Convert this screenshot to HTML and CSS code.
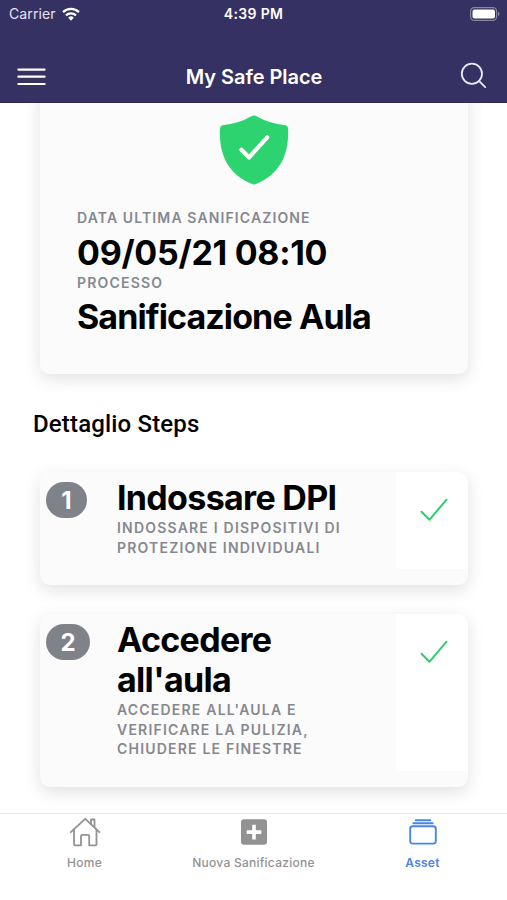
FILE: index.html
```html
<!DOCTYPE html>
<html lang="it">
<head>
<meta charset="utf-8">
<meta name="viewport" content="width=device-width, initial-scale=1">
<title>My Safe Place</title>
<link rel="stylesheet" href="styles.css">
</head>
<body>
<div class="app">
  <header class="header">
    <div class="status">
      <div class="status-left">
        <span class="carrier">Carrier</span>
        <svg class="wifi" width="18" height="14" viewBox="0 0 18 14" fill="none" stroke="#fff" stroke-width="2.3"><path d="M1 5.2a11.5 11.5 0 0 1 16 0"/><path d="M4 8.4a7.2 7.2 0 0 1 10 0"/><path d="M9 13.8l-2.8-3.1a4 4 0 0 1 5.6 0z" fill="#fff" stroke="none"/></svg>
      </div>
      <span class="time">4:39 PM</span>
      <div class="status-right">
        <svg width="31" height="14" viewBox="0 0 31 14"><rect x=".6" y=".6" width="26" height="12.8" rx="3.6" fill="none" stroke="#88859f" stroke-width="1.2"/><rect x="2.5" y="2.5" width="22.5" height="9" rx="2" fill="#fff"/><path d="M28 4.5q3 2.5 0 5z" fill="#88859f"/></svg>
      </div>
    </div>
    <div class="navbar">
      <div class="nav-side">
        <svg width="29" height="18" viewBox="0 0 29 18" stroke="#fff" stroke-width="2.2" stroke-linecap="round"><path d="M1.4 1.6h26.2M1.4 8.7h26.2M1.4 16h26.2"/></svg>
      </div>
      <h1 class="title">My Safe Place</h1>
      <div class="nav-side end">
        <svg class="search" width="28" height="28" viewBox="0 0 28 28" fill="none" stroke="#e9e7f8" stroke-width="1.8" stroke-linecap="round"><circle cx="11.9" cy="11.8" r="10.1"/><path d="M19.2 19.2l6 6"/></svg>
      </div>
    </div>
  </header>

  <main class="content">
    <section class="card summary">
      <svg class="shield" width="70" height="70" viewBox="0 0 70 70"><path d="M32.4 1.2Q35 -.2 37.6 1.2Q50 8.5 66.5 10.2Q68.7 10.6 69 13C70.5 39 61 59 37.5 68.8Q35 70 32.5 68.8C9 59 -.5 39 1 13Q1.3 10.6 3.5 10.2Q20 8.5 32.4 1.2Z" fill="#2dd36f"/><path d="M22.5 34.8l7.5 7.7L48.2 22.3" fill="none" stroke="#fff" stroke-width="4.2" stroke-linecap="round" stroke-linejoin="round"/></svg>
      <p class="label label-date">DATA ULTIMA SANIFICAZIONE</p>
      <p class="value value-date">09/05/21 08:10</p>
      <p class="label label-process">PROCESSO</p>
      <p class="value value-process">Sanificazione Aula</p>
    </section>

    <h2 class="section-title">Dettaglio Steps</h2>

    <article class="card step">
      <div class="step-num"><span class="badge">1</span></div>
      <div class="step-text">
        <h3 class="step-title">Indossare DPI</h3>
        <p class="label">INDOSSARE I DISPOSITIVI DI<br>PROTEZIONE INDIVIDUALI</p>
      </div>
      <div class="step-state"><svg width="28" height="24" viewBox="0 0 28 24" fill="none" stroke="#2bcf6c" stroke-width="2" stroke-linecap="round" stroke-linejoin="round"><path d="M1.5 13.8l7.9 8L26.5 1.7"/></svg></div>
    </article>

    <article class="card step">
      <div class="step-num"><span class="badge wide">2</span></div>
      <div class="step-text">
        <h3 class="step-title">Accedere<br>all'aula</h3>
        <p class="label">ACCEDERE ALL'AULA E<br>VERIFICARE LA PULIZIA,<br>CHIUDERE LE FINESTRE</p>
      </div>
      <div class="step-state"><svg width="28" height="24" viewBox="0 0 28 24" fill="none" stroke="#2bcf6c" stroke-width="2" stroke-linecap="round" stroke-linejoin="round"><path d="M1.5 13.8l7.9 8L26.5 1.7"/></svg></div>
    </article>
  </main>

  <nav class="tabs">
    <a class="tab">
      <svg width="32" height="30" viewBox="0 0 32 30" fill="none" stroke="#929292" stroke-width="1.8" stroke-linejoin="round" stroke-linecap="round"><path d="M1.8 15.2L16.200 1.800l14.200 13.400"/><path d="M5 12.500V27.200q0 1.200 1.200 1.200H12V19q0-1.200 1.200-1.200h5.800Q20.200 17.800 20.200 19v9.400h6.100q1.200 0 1.200-1.200V12.500"/><path d="M22 6.500V2.500h3.500v7"/></svg>
      <span>Home</span>
    </a>
    <a class="tab">
      <svg width="32" height="30" viewBox="0 0 32 30"><path fill="#929292" fill-rule="evenodd" d="M6 2.200h20a3 3 0 0 1 3 3v19.600a3 3 0 0 1-3 3H6a3 3 0 0 1-3-3V5.200a3 3 0 0 1 3-3ZM14.200 7.800v5.500h-5.500v3.600h5.500v5.500h3.600v-5.500h5.500v-3.600h-5.500v-5.500Z"/></svg>
      <span>Nuova Sanificazione</span>
    </a>
    <a class="tab active">
      <svg width="32" height="30" viewBox="0 0 32 30" fill="none" stroke="#4a86e4" stroke-width="1.9" stroke-linecap="round"><rect x="3.200" y="9.300" width="25.600" height="17.300" rx="2.500"/><path d="M6.300 6.200h19.400M8.700 3.300h14.600"/></svg>
      <span>Asset</span>
    </a>
  </nav>
</div>
</body>
</html>
```
FILE: styles.css
```css
* { box-sizing: border-box; }
body, h1, h2, h3, p { margin: 0; }
body { background: #fff; font-family: Inter, "Liberation Sans", sans-serif; color: #000; }
svg { display: block; flex: none; }

.app { display: flex; flex-direction: column; height: 900px; overflow: hidden; }

.header { height: 103px; flex: none; background: #353162; border-bottom: 1px solid #2b285b; color: #fff; }
.status { display: grid; grid-template-columns: 1fr auto 1fr; align-items: center; height: 27px; padding: 0 6px 0 9px; font-size: 14px; }
.status-left { display: flex; align-items: center; gap: 6px; }
.carrier { color: #e5e3f3; letter-spacing: .1px; }
.time { margin-right: 3px; font-weight: 600; font-size: 14px; letter-spacing: .35px; }
.status-right { display: flex; justify-content: flex-end; }
.navbar { display: grid; grid-template-columns: 1fr auto 1fr; align-items: center; height: 56px; margin-top: 22px; padding: 0 19px 0 17px; }
.nav-side { display: flex; }
.end { justify-content: flex-end; }
.search { margin-top: -2px; }
.title { margin-left: 3px; font-size: 20px; line-height: 24px; font-weight: 600; letter-spacing: -.05px; white-space: nowrap; }

.content { flex: 1; min-height: 0; overflow: hidden; padding: 0 39px 0 40px; }
.card { background: #fbfbfb; border-radius: 10px; box-shadow: 0 5px 17px rgba(0, 0, 0, .12); }
.label { color: #86888f; font-size: 14px; line-height: 19.5px; font-weight: 600; letter-spacing: 1.2px; white-space: nowrap; }

.summary { height: 291px; margin-top: -20px; padding: 32px 37px 0; }
.shield { margin: 0 auto 23px; }
.label-date { letter-spacing: 1.12px; }
.value { font-size: 34px; line-height: 49px; font-weight: 700; white-space: nowrap; }
.value-date { height: 45px; letter-spacing: -.28px; }
.value-process { letter-spacing: -.9px; }

.section-title { margin: 35px 0 32px -7px; font: 500 24px/31px Roboto, sans-serif; letter-spacing: .16px; white-space: nowrap; }

.step { display: grid; grid-template-columns: 77px 1fr 72px; padding-bottom: 16px; overflow: hidden; }
.step + .step { margin-top: 29px; }
.step-num { padding: 10px 0 0 6px; }
.badge { display: flex; align-items: center; justify-content: center; width: 41px; height: 36px; border-radius: 18px; background: #808289; color: #fff; font-size: 24px; font-weight: 700; }
.wide { width: 44px; }
.step-text { padding: 6px 0 12px; }
.step-title { font-size: 34px; line-height: 40px; font-weight: 700; letter-spacing: -.68px; white-space: nowrap; }
.step-state { background: #fff; padding: 26px 0 0 24px; }

.tabs { display: grid; grid-template-columns: repeat(3, 1fr); flex: none; height: 87px; border-top: 1px solid #e6e6e6; background: #fff; }
.tab { display: flex; flex-direction: column; align-items: center; padding-top: 3px; color: #929292; font-size: 12px; line-height: 16px; font-weight: 500; letter-spacing: .25px; white-space: nowrap; }
.tab span { margin-top: 8px; }
.active { color: #4a86e4; font-weight: 600; }
```
